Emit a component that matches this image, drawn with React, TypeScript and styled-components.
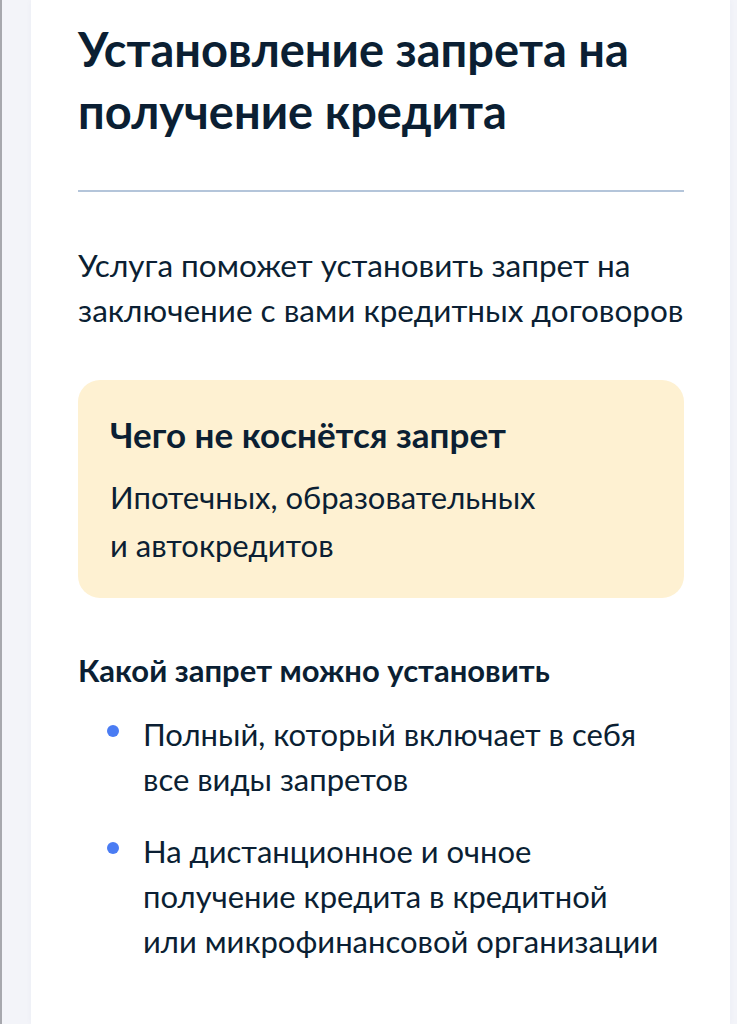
import React from "react";
import styled, { createGlobalStyle } from "styled-components";

const GlobalStyle = createGlobalStyle`
  html, body {
    margin: 0;
    padding: 0;
    background: #f3f4f9;
  }
  body {
    font-family: Lato, "Noto Sans", sans-serif;
    color: #0b1f33;
  }
  * { box-sizing: border-box; }
`;

const Page = styled.div`
  min-height: 1024px;
  border-left: 2px solid #a7a8ae;
  padding-left: 29px;
  display: flex;
`;

const Card = styled.main`
  width: 699px;
  min-height: 1024px;
  background: #ffffff;
  padding: 18px 46px 40px 47px;
  box-shadow: 0 0 6px rgba(60, 70, 120, 0.04);
  display: flex;
  flex-direction: column;
`;

const Title = styled.h1`
  margin: 0;
  font-size: 47px;
  line-height: 62px;
  font-weight: 700;
  color: #0b1f33;
`;

const Divider = styled.hr`
  margin: 48px 0 0;
  border: 0;
  height: 2px;
  background: #b4c5da;
`;

const Lead = styled.p`
  margin: 51px 0 0;
  font-size: 31.5px;
  line-height: 45px;
`;

const Notice = styled.section`
  margin-top: 47px;
  background: #fef1d2;
  border-radius: 22px;
  padding: 34px 32px 29px;
`;

const NoticeTitle = styled.h3`
  margin: 0;
  font-size: 35px;
  line-height: 40px;
  font-weight: 700;
`;

const NoticeText = styled.p`
  margin: 19px 0 0;
  font-size: 31px;
  line-height: 48px;
`;

const SectionTitle = styled.h2`
  margin: 52px 0 0;
  font-size: 31px;
  line-height: 40px;
  font-weight: 700;
`;

const List = styled.ul`
  list-style: none;
  margin: 22px 0 0;
  padding: 0;
  display: flex;
  flex-direction: column;
  gap: 27px;
`;

const Item = styled.li`
  display: flex;
  align-items: flex-start;
  font-size: 31px;
  line-height: 45px;
`;

const Dot = styled.span`
  flex: none;
  width: 12px;
  height: 12px;
  border-radius: 50%;
  background: #4a7cf3;
  margin: 13px 24px 0 29px;
`;

const bullets = [
  ["Полный, который включает в себя", "все виды запретов"],
  ["На дистанционное и очное", "получение кредита в кредитной", "или микрофинансовой организации"],
];

export default function App() {
  return (
    <>
      <GlobalStyle />
      <Page>
        <Card>
          <Title>
            Установление запрета на
            <br />
            получение кредита
          </Title>
          <Divider />
          <Lead>
            Услуга поможет установить запрет на
            <br />
            заключение с вами кредитных договоров
          </Lead>
          <Notice>
            <NoticeTitle>Чего не коснётся запрет</NoticeTitle>
            <NoticeText>
              Ипотечных, образовательных
              <br />и автокредитов
            </NoticeText>
          </Notice>
          <SectionTitle>Какой запрет можно установить</SectionTitle>
          <List>
            {bullets.map((lines, i) => (
              <Item key={i}>
                <Dot />
                <span>
                  {lines.map((l, j) => (
                    <React.Fragment key={j}>
                      {j > 0 && <br />}
                      {l}
                    </React.Fragment>
                  ))}
                </span>
              </Item>
            ))}
          </List>
        </Card>
      </Page>
    </>
  );
}
